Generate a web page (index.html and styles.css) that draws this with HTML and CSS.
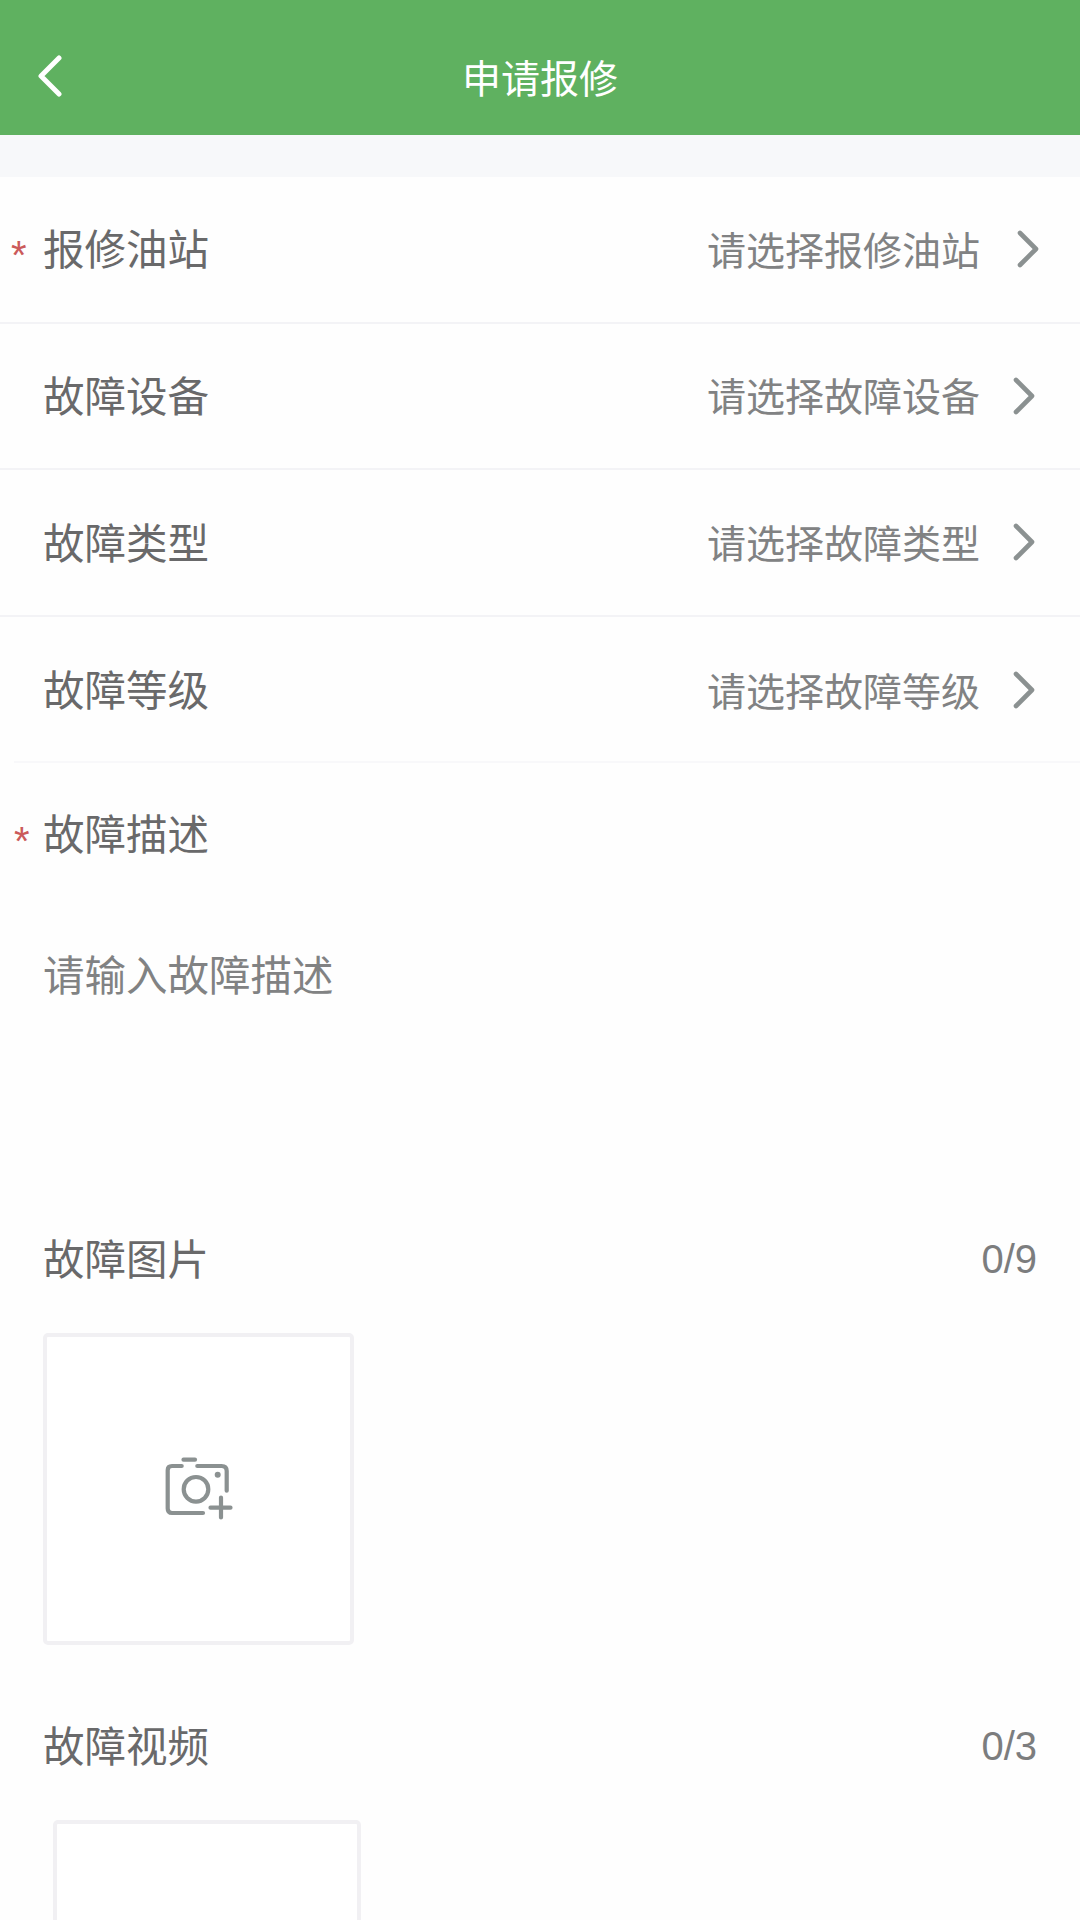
FILE: index.html
```html
<!DOCTYPE html>
<html lang="zh-CN">
<head>
<meta charset="utf-8">
<title>申请报修</title>
<link rel="stylesheet" href="styles.css">
</head>
<body>
<div class="page">
  <header class="topbar">
    <svg class="back" viewBox="0 0 26 42"><path d="M22 3 L4 21 L22 39"/></svg>
    <h1 class="title">申请报修</h1>
  </header>
  <div class="band"></div>
  <section class="rows">
    <div class="row">
      <span class="star">*</span>
      <span class="label">报修油站</span>
      <span class="value">请选择报修油站</span>
      <svg class="chev chev-first" viewBox="0 0 22 38"><path d="M3 3 L19 19 L3 35"/></svg>
    </div>
    <div class="row">
      <span class="label">故障设备</span>
      <span class="value">请选择故障设备</span>
      <svg class="chev" viewBox="0 0 22 38"><path d="M3 3 L19 19 L3 35"/></svg>
    </div>
    <div class="row">
      <span class="label">故障类型</span>
      <span class="value">请选择故障类型</span>
      <svg class="chev" viewBox="0 0 22 38"><path d="M3 3 L19 19 L3 35"/></svg>
    </div>
    <div class="row row-inset">
      <span class="label">故障等级</span>
      <span class="value">请选择故障等级</span>
      <svg class="chev" viewBox="0 0 22 38"><path d="M3 3 L19 19 L3 35"/></svg>
    </div>
  </section>
  <section class="desc">
    <div class="desc-head">
      <span class="star star-desc">*</span>
      <span class="label">故障描述</span>
    </div>
    <div class="placeholder">请输入故障描述</div>
  </section>
  <section class="media media-photo">
    <div class="media-head">
      <span class="label">故障图片</span>
      <span class="count">0/9</span>
    </div>
    <div class="upload">
      <svg class="camera" viewBox="0 0 77 78">
        <path d="M21.7 16 H12 Q7.7 16 7.7 20.3 V58.5 Q7.7 63 12 63 H43"/>
        <path d="M37.3 16 H61.5 Q66.7 16 66.7 21 V40.7"/>
        <path d="M23.5 9.7 H35"/>
        <circle cx="36" cy="39.3" r="12.3"/>
        <circle class="dot" cx="57.7" cy="24.7" r="3"/>
        <path d="M50.5 57.7 H70.5 M61 47.5 V67.5"/>
      </svg>
    </div>
  </section>
  <section class="media media-video">
    <div class="media-head">
      <span class="label">故障视频</span>
      <span class="count">0/3</span>
    </div>
    <div class="upload upload-video"></div>
  </section>
</div>
</body>
</html>
```
FILE: styles.css
```css
* { box-sizing: border-box; }
html, body { margin: 0; padding: 0; }
body {
  width: 1080px;
  height: 1920px;
  overflow: hidden;
  background: #fefefe;
  font-family: "Noto Sans CJK SC", "Noto Sans", sans-serif;
}
.page { width: 1080px; height: 1920px; overflow: hidden; }

.topbar {
  height: 135px;
  padding-top: 17px;
  background: #5fb160;
  display: flex;
  align-items: center;
  justify-content: center;
  position: relative;
}
.back {
  position: absolute;
  left: 37px;
  top: 55px;
  width: 26px;
  height: 42px;
  fill: none;
  stroke: #fff;
  stroke-width: 5;
  stroke-linecap: round;
  stroke-linejoin: round;
}
.title {
  margin: 0;
  font-size: 39px;
  font-weight: 400;
  color: #fff;
  line-height: 1;
}
.band { height: 42px; background: #f7f8fa; }

.rows { background: #fefefe; }
.row {
  height: 146.6px;
  display: flex;
  align-items: center;
  padding: 0 45px 0 43px;
  border-bottom: 2px solid #f3f3f6;
  position: relative;
}
.row-inset { border-bottom: 0; }
.row-inset::after {
  content: "";
  position: absolute;
  left: 14px;
  right: 0;
  bottom: 0;
  height: 2px;
  background: #f8f8fa;
}
.label {
  font-size: 41.5px;
  line-height: 1.2;
  color: #69696a;
  position: relative;
  top: -1px;
}
.value {
  margin-left: auto;
  font-size: 39px;
  line-height: 1.2;
  color: #818283;
  position: relative;
  top: -1px;
}
.chev {
  width: 22px;
  height: 38px;
  margin-left: 33px;
  flex: none;
  fill: none;
  stroke: #8b9191;
  stroke-width: 4.6;
  stroke-linecap: round;
  stroke-linejoin: round;
}
.chev-first { position: relative; left: 4px; }
.star {
  position: absolute;
  left: 11px;
  top: 50%;
  margin-top: -14px;
  font-family: "Liberation Sans", sans-serif;
  font-size: 40px;
  line-height: 40px;
  color: #cb5a5a;
}

.desc { padding: 0 43px; height: 468px; }
.desc-head {
  height: 142px;
  display: flex;
  align-items: center;
  position: relative;
}
.star-desc { left: -29px; margin-top: -13px; }
.placeholder {
  font-size: 41.5px;
  line-height: 1.2;
  color: #818283;
  margin-top: 44px;
}

.media { padding: 0 43px; }
.media-photo { height: 487px; }
.media-head {
  display: flex;
  align-items: center;
  justify-content: space-between;
  height: 50px;
  padding-top: 6px;
}
.count {
  font-family: "Liberation Sans", sans-serif;
  font-size: 40px;
  line-height: 1;
  color: #7c7d7e;
}
.upload {
  width: 311px;
  height: 312px;
  margin-top: 52px;
  border: 4px solid #f1f0f3;
  border-radius: 5px;
  background: #fff;
  display: flex;
  align-items: center;
  justify-content: center;
}
.camera {
  width: 77px;
  height: 78px;
  fill: none;
  stroke: #8b9191;
  stroke-width: 4.2;
  stroke-linecap: round;
}
.camera .dot { fill: #8b9191; stroke: none; }
.upload-video {
  width: 308px;
  margin-left: 10px;
  margin-top: 52px;
}
```
